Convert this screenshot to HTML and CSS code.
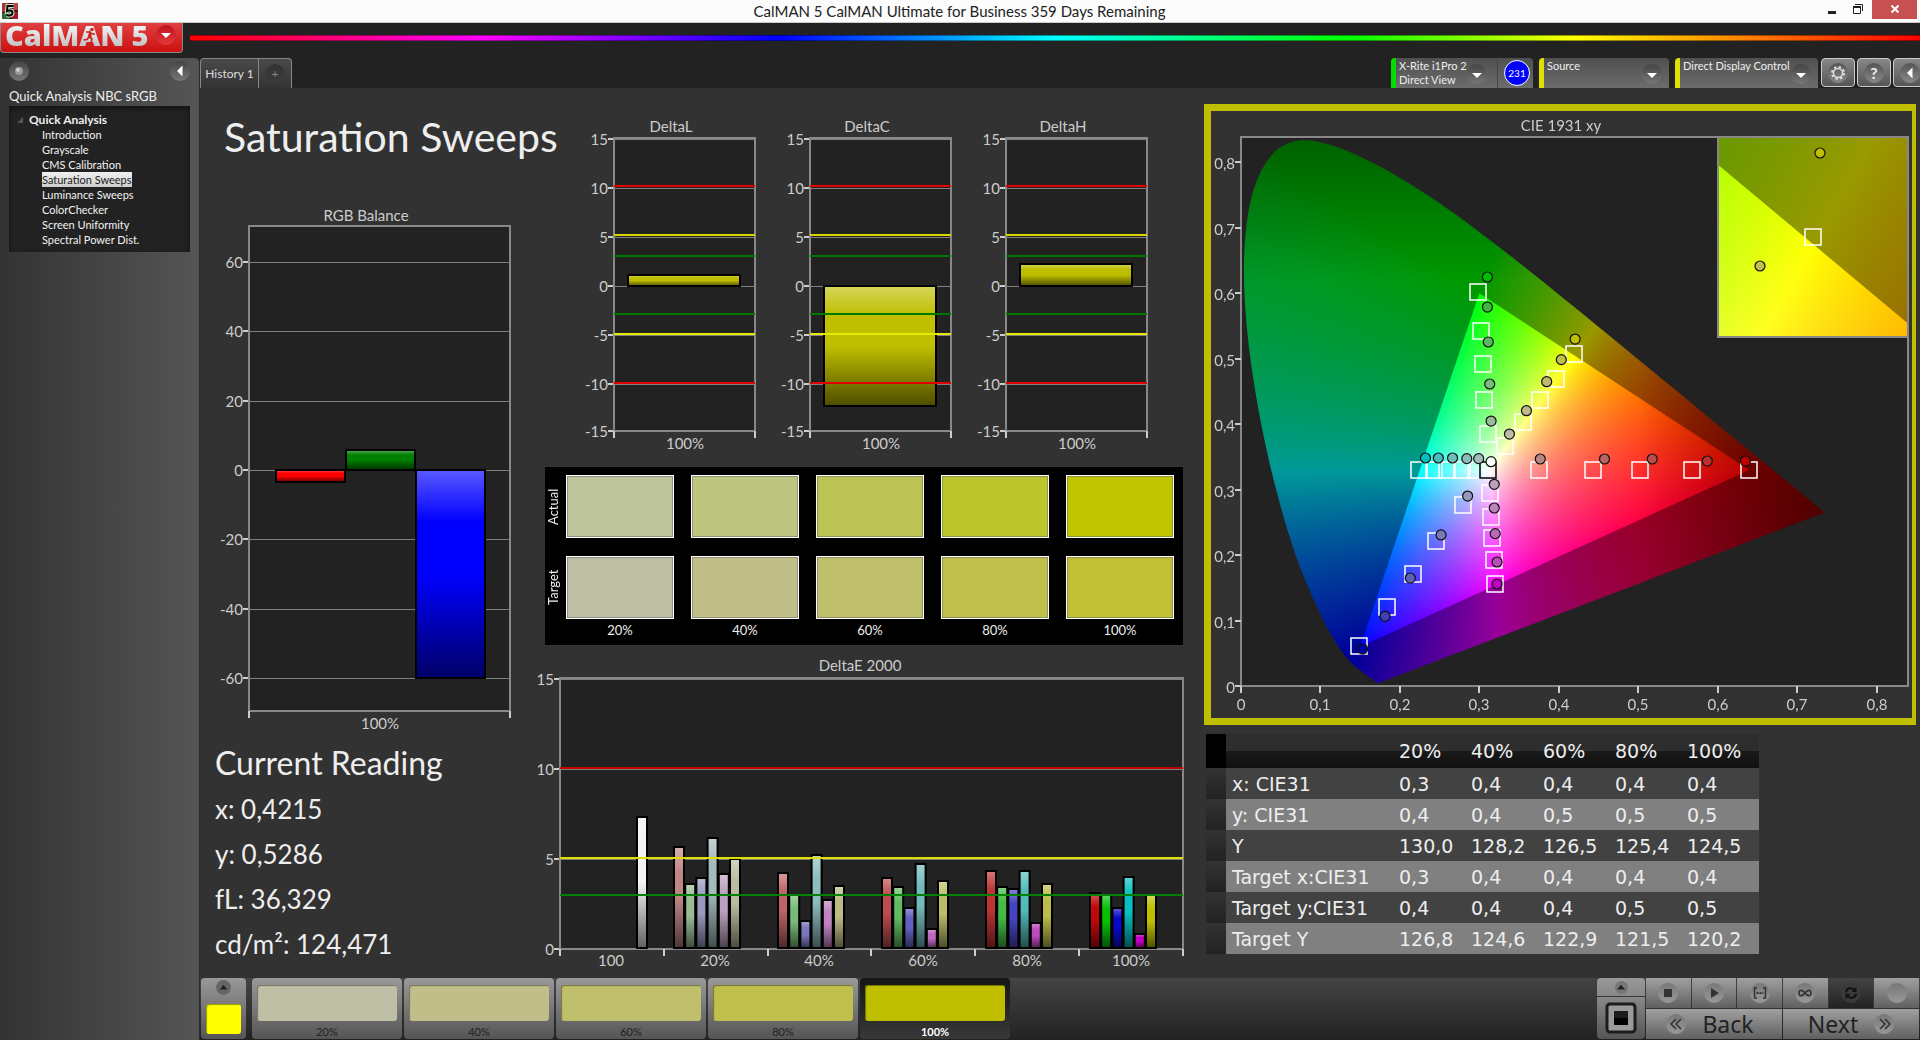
FILE: index.html
```html
<!DOCTYPE html>
<html lang="en">
<head>
  <meta charset="UTF-8" />
  <title>CalMAN 5 CalMAN Ultimate for Business</title>
  <link rel="stylesheet" href="styles.css">
</head>
<body>

  <!-- Shared gradients for every chart -->
  <svg class="defs" width="0" height="0" aria-hidden="true">
    <defs>
      <linearGradient id="shine" x1="0" y1="0" x2="0" y2="1">
        <stop offset="0" stop-color="#fff" stop-opacity="0.35" />
        <stop offset="0.25" stop-color="#fff" stop-opacity="0" />
        <stop offset="0.5" stop-color="#000" stop-opacity="0" />
        <stop offset="1" stop-color="#000" stop-opacity="0.6" />
      </linearGradient>
    </defs>
  </svg>

  <!-- Window title bar -->
  <header class="titlebar">
    <svg class="app-icon" viewBox="0 0 16 16">
      <rect width="16" height="16" fill="#3c1a1a" />
      <rect width="6" height="9" fill="#a33" />
      <rect x="11" width="5" height="7" fill="#b44" />
      <rect y="10" width="7" height="6" fill="#2a6a2a" />
      <rect x="10" y="9" width="6" height="7" fill="#a01830" />
      <path d="M11.5 3H5.5L5 8c2-1 5.500-.8 5.500 1.800S7.500 13 4.500 12" fill="none" stroke="#cfe8c8" stroke-width="4" />
      <path d="M11.500 3H5.500L5 8c2-1 5.500-.8 5.500 1.800S7.500 13 4.500 12" fill="none" stroke="#000" stroke-width="2" />
    </svg>
    <span class="window-title">CalMAN 5 CalMAN Ultimate for Business 359 Days Remaining</span>
    <div class="window-buttons">
      <button class="win" aria-label="Minimize"><svg viewBox="0 0 12 12"><path d="M2 9.500h8" stroke="#222" stroke-width="3" /></svg></button>
      <button class="win" aria-label="Restore"><svg viewBox="0 0 12 12"><path d="M3 1.500h7.500V8M1.500 4.500h7v6h-7z" fill="none" stroke="#222" /><path d="M1 4h8" stroke="#222" stroke-width="2" /></svg></button>
      <button class="win close" aria-label="Close"><svg viewBox="0 0 12 12"><path d="M2.500 2.500l7 7M9.500 2.500l-7 7" stroke="#fff" stroke-width="2" /></svg></button>
    </div>
  </header>

  <div class="brandbar">
    <button class="logo" aria-label="CalMAN 5 menu">
      <span class="logo-text">CalMAN</span>
      <svg class="runner" viewBox="0 0 14 16"><circle cx="9" cy="2.500" r="1.800" fill="#c22" /><path d="M3 5l4 0 2 2 3 0M7.500 5L6 10l3 2-1 3.500M6 10l-2 2.500-3.500.5" fill="none" stroke="#c22" stroke-width="1.600" /></svg>
      <span class="logo-text">5</span>
      <span class="knob knob-red"><svg viewBox="0 0 20 20"><path d="M5 8h10l-5 5z" fill="#fff" /></svg></span>
    </button>
    <div class="rainbow"></div>
  </div>

  <div class="workspace">
    <!-- Workflow tree -->
    <aside class="sidebar">
      <div class="sidebar-top">
        <button class="knob" aria-label="Record"><svg viewBox="0 0 20 20"><circle cx="10" cy="10" r="4" fill="#999" /><circle cx="9" cy="9" r="2" fill="#ccc" /></svg></button>
        <button class="knob" aria-label="Collapse"><svg viewBox="0 0 20 20"><path d="M12.500 4.500v11L7 10z" fill="#fff" /></svg></button>
      </div>
      <h2>Quick Analysis NBC sRGB</h2>
      <nav class="tree">
        <p class="tree-root"><svg viewBox="0 0 6 6"><path d="M6 0v6H0z" fill="#555" /></svg>Quick Analysis</p>
        <a href="#">Introduction</a>
        <a href="#">Grayscale</a>
        <a href="#">CMS Calibration</a>
        <a href="#" class="selected">Saturation Sweeps</a>
        <a href="#">Luminance Sweeps</a>
        <a href="#">ColorChecker</a>
        <a href="#">Screen Uniformity</a>
        <a href="#">Spectral Power Dist.</a>
      </nav>
    </aside>

    <main class="main">
      <div class="toolbar">
        <div class="tabs">
          <button class="tab">History 1</button>
          <button class="tab tab-add" aria-label="Add history"><span class="knob">+</span></button>
        </div>
        <div class="devices">
          <div class="device-group">
            <button class="device meter">
              <span>X-Rite i1Pro 2<br>Direct View</span>
              <span class="knob"><svg viewBox="0 0 20 20"><path d="M5 9h10l-5 5z" fill="#fff" /></svg></span>
            </button>
            <span class="count">231</span>
          </div>
          <button class="device source">
            <span>Source</span>
            <span class="knob"><svg viewBox="0 0 20 20"><path d="M5 9h10l-5 5z" fill="#fff" /></svg></span>
          </button>
          <button class="device display">
            <span>Direct Display Control</span>
            <span class="knob"><svg viewBox="0 0 20 20"><path d="M5 9h10l-5 5z" fill="#fff" /></svg></span>
          </button>
          <div class="tools">
            <button class="tool" aria-label="Settings"><span class="knob"><svg viewBox="0 0 20 20"><circle cx="10" cy="10" r="4.500" fill="none" stroke="#ddd" stroke-width="1.500" /><circle cx="10" cy="10" r="6" fill="none" stroke="#ddd" stroke-width="2" stroke-dasharray="2.400 2.312" /></svg></span></button>
            <button class="tool" aria-label="Help"><span class="knob help">?</span></button>
            <button class="tool" aria-label="Hide panel"><span class="knob"><svg viewBox="0 0 20 20"><path d="M12.500 4.500v11L7 10z" fill="#fff" /></svg></span></button>
          </div>
        </div>
      </div>

      <div class="content">
        <section class="col-left">
          <h1>Saturation Sweeps</h1>
          <svg id="rgbBalance" class="chart" viewBox="0 0 321 530"></svg>
          <div class="readings">
            <h3>Current Reading</h3>
            <p>x: 0,4215</p>
            <p>y: 0,5286</p>
            <p>fL: 36,329</p>
            <p>cd/m²: 124,471</p>
          </div>
        </section>

        <section class="col-middle">
          <div class="deltas">
            <svg id="deltaL" class="chart" viewBox="0 0 196 345"></svg>
            <svg id="deltaC" class="chart" viewBox="0 0 196 345"></svg>
            <svg id="deltaH" class="chart" viewBox="0 0 196 345"></svg>
          </div>
          <div class="swatches">
            <span class="side-label">Actual</span>
            <div class="swatch a20"></div>
            <div class="swatch a40"></div>
            <div class="swatch a60"></div>
            <div class="swatch a80"></div>
            <div class="swatch a100"></div>
            <span class="side-label">Target</span>
            <div class="swatch t20"></div>
            <div class="swatch t40"></div>
            <div class="swatch t60"></div>
            <div class="swatch t80"></div>
            <div class="swatch t100"></div>
            <span></span>
            <span class="percent">20%</span>
            <span class="percent">40%</span>
            <span class="percent">60%</span>
            <span class="percent">80%</span>
            <span class="percent">100%</span>
          </div>
          <svg id="deltaE" class="chart" viewBox="0 0 654 322"></svg>
        </section>

        <section class="col-right">
          <div class="cie">
            <canvas id="cieColors" width="701" height="607"></canvas>
            <svg id="ciePoints" class="chart" viewBox="0 0 701 607"></svg>
          </div>
          <table class="results">
            <thead>
              <tr><th class="grip"></th><th></th><th>20%</th><th>40%</th><th>60%</th><th>80%</th><th>100%</th></tr>
            </thead>
            <tbody>
              <tr><td class="grip"></td><th>x: CIE31</th><td>0,3</td><td>0,4</td><td>0,4</td><td>0,4</td><td>0,4</td></tr>
              <tr><td class="grip"></td><th>y: CIE31</th><td>0,4</td><td>0,4</td><td>0,5</td><td>0,5</td><td>0,5</td></tr>
              <tr><td class="grip"></td><th>Y</th><td>130,0</td><td>128,2</td><td>126,5</td><td>125,4</td><td>124,5</td></tr>
              <tr><td class="grip"></td><th>Target x:CIE31</th><td>0,3</td><td>0,4</td><td>0,4</td><td>0,4</td><td>0,4</td></tr>
              <tr><td class="grip"></td><th>Target y:CIE31</th><td>0,4</td><td>0,4</td><td>0,4</td><td>0,5</td><td>0,5</td></tr>
              <tr><td class="grip"></td><th>Target Y</th><td>126,8</td><td>124,6</td><td>122,9</td><td>121,5</td><td>120,2</td></tr>
            </tbody>
          </table>
        </section>
      </div>

      <footer class="bottombar">
        <button class="current-color" aria-label="Current color">
          <svg viewBox="0 0 16 16"><circle cx="8" cy="8" r="8" fill="#666" /><path d="M4 10h8L8 5z" fill="#222" /></svg>
          <span class="chip"></span>
        </button>
        <div class="steps">
          <button class="step"><span class="chip t20"></span>20%</button>
          <button class="step"><span class="chip t40"></span>40%</button>
          <button class="step"><span class="chip t60"></span>60%</button>
          <button class="step"><span class="chip t80"></span>80%</button>
          <button class="step active"><span class="chip y100"></span>100%</button>
        </div>
        <div class="pattern">
          <button aria-label="Expand"><svg viewBox="0 0 16 16"><circle cx="8" cy="8" r="7" fill="#777" /><path d="M3 10h9L7.500 5z" fill="#222" /></svg></button>
          <button aria-label="Pattern window"><svg viewBox="0 0 32 32"><rect x="2" y="2" width="28" height="28" rx="3" fill="#9a9a9a" stroke="#1c1c1c" stroke-width="3" /><rect x="9" y="9" width="14" height="14" fill="#000" /><rect x="9" y="9" width="14" height="7" fill="#1c1c1c" /></svg></button>
        </div>
        <div class="transport">
          <button aria-label="Stop"><span class="knob"><svg viewBox="0 0 20 20"><path d="M6 6h8v8H6z" fill="#333" /></svg></span></button>
          <button aria-label="Play"><span class="knob"><svg viewBox="0 0 20 20"><path d="M7 5l8 5-8 5z" fill="#333" /></svg></span></button>
          <button aria-label="Read series"><span class="knob"><svg viewBox="0 0 20 20"><path d="M7 5H4.500v10H7M13 5h2.500v10H13" fill="none" stroke="#333" stroke-width="1.500" /><path d="M6.500 10h7" stroke="#333" stroke-width="2" stroke-dasharray="2 1" /></svg></span></button>
          <button aria-label="Continuous"><span class="knob"><svg viewBox="0 0 20 20"><path d="M10 10c-2-3-6-4-6 0s4 3 6 0 6-4 6 0-4 3-6 0z" fill="none" stroke="#333" stroke-width="1.700" /></svg></span></button>
          <button class="pressed" aria-label="Repeat"><span class="knob"><svg viewBox="0 0 20 20"><path d="M5 9.500C5 5.500 10 4 13 6.500M15 10.500c0 4-5 5.500-8 3" fill="none" stroke="#111" stroke-width="2" /><path d="M15.500 4v5h-5zM4.500 16v-5h5z" fill="#111" /></svg></span></button>
          <button aria-label="Status"><span class="knob"></span></button>
          <button class="nav-button back"><span class="knob"><svg viewBox="0 0 20 20"><path d="M10 5l-5 5 5 5M15 5l-5 5 5 5" fill="none" stroke="#333" stroke-width="1.500" /></svg></span>Back</button>
          <button class="nav-button next">Next<span class="knob"><svg viewBox="0 0 20 20"><path d="M6 5l5 5-5 5M11 5l5 5-5 5" fill="none" stroke="#333" stroke-width="1.500" /></svg></span></button>
        </div>
      </footer>
    </main>
  </div>

  <script src="script.js"></script>
</body>
</html>
```
FILE: styles.css
```css
* {
  box-sizing: border-box;
}
body {
  font-family: Lato, 'Liberation Sans', sans-serif;
  margin: 0;
  min-height: 100vh;
  display: flex;
  flex-direction: column;
  background: #222;
  color: #eee;
}
button {
  font-family: inherit;
  color: inherit;
  border: none;
  padding: 0;
  background: none;
  cursor: pointer;
}
h1, h2, h3, p {
  margin: 0;
  font-weight: normal;
}
.defs {
  position: absolute;
}

/* Title bar */
.titlebar {
  display: flex;
  align-items: center;
  height: 23px;
  padding: 0 3px 0 2px;
  background: #fcfcfc;
  border-bottom: 1px solid #ccc;
  color: #222;
}
.app-icon {
  width: 16px;
  height: 16px;
}
.window-title {
  flex: 1;
  text-align: center;
  font-size: 15px;
  padding-left: 82px;
}
.window-buttons {
  display: flex;
  align-self: flex-start;
}
.win {
  width: 26px;
  height: 19px;
}
.win svg {
  width: 12px;
  height: 12px;
}
.win.close {
  width: 45px;
  margin-left: 1px;
  background: #c75050;
}

/* Logo and rainbow line */
.brandbar {
  display: flex;
  align-items: flex-start;
  gap: 7px;
  height: 35px;
}
.logo {
  position: relative;
  display: flex;
  align-items: center;
  gap: 7px;
  width: 183px;
  height: 30px;
  padding: 0 0 5px 4px;
  background: linear-gradient(#e04040, #cc1010);
  border: 1px solid #888;
  border-top: none;
  border-radius: 0 0 4px 4px;
}
.logo-text {
  font-family: 'Open Sans', sans-serif;
  font-size: 29px;
  line-height: 28px;
  font-weight: 800;
  background: linear-gradient(#fff, #bbb);
  background-clip: text;
  color: transparent;
}
.runner {
  position: absolute;
  left: 82px;
  top: 4px;
  width: 14px;
  height: 16px;
}
.rainbow {
  flex: 1;
  height: 6px;
  margin-top: 12px;
  border: 1px solid rgba(0, 0, 0, 0.4);
  border-width: 1px 0;
  background: linear-gradient(to right, #f00, #f0f 17%, #00f 34%, #0ff 50%, #0f0 67%, #ff0 80%, #f00);
}

/* Round icon holder used all over */
.knob {
  display: flex;
  align-items: center;
  justify-content: center;
  flex: none;
  width: 20px;
  height: 20px;
  border-radius: 50%;
  background: linear-gradient(#444, #777);
}
.knob svg {
  width: 20px;
  height: 20px;
}
.knob-red {
  background: linear-gradient(#c01020, #e03a3a);
}

.workspace {
  flex: 1;
  display: grid;
  grid-template-columns: 200px minmax(0, 1fr);
}

/* Sidebar */
.sidebar {
  padding: 3px 9px;
  background: linear-gradient(to right, #333, #555);
  border-right: 1px solid #2a2a2a;
  border-radius: 0 5px 0 0;
}
.sidebar-top {
  display: flex;
  justify-content: space-between;
}
.sidebar h2 {
  font-size: 13px;
  line-height: 20px;
  margin: 5px 0 0;
}
.tree {
  display: flex;
  flex-direction: column;
  align-items: flex-start;
  height: 146px;
  padding: 6px 8px 0 33px;
  background: #222;
  box-shadow: inset 0 2px 5px #111;
}
.tree-root {
  display: flex;
  align-items: center;
  gap: 6px;
  margin-left: -25px;
  font-size: 12px;
  line-height: 15px;
  font-weight: bold;
}
.tree-root svg {
  width: 6px;
  height: 6px;
}
.tree a {
  color: #f2f2f2;
  font-size: 11px;
  line-height: 15px;
  text-decoration: none;
}
.tree a.selected {
  background: linear-gradient(#f0f0f0, #ccc);
  color: #222;
}

/* Tabs and device buttons */
.main {
  display: flex;
  flex-direction: column;
  background: #323232;
}
.toolbar {
  display: flex;
  justify-content: space-between;
  height: 30px;
  background: #222;
}
.tabs {
  display: flex;
  border: 1px solid #888;
  border-bottom: none;
  border-radius: 4px 4px 0 0;
  background: linear-gradient(#4a4a4a, #333);
}
.tab {
  width: 57px;
  font-size: 12px;
  color: #ddd;
}
.tab-add {
  display: flex;
  align-items: center;
  justify-content: center;
  width: 33px;
  border-left: 1px solid #888;
  color: #888;
}
.tab-add .knob {
  background: linear-gradient(#333, #3c3c3c);
}
.devices {
  display: flex;
  gap: 6px;
  overflow: hidden;
}
.device-group {
  display: flex;
  align-items: center;
  gap: 6px;
  padding-right: 3px;
  background: linear-gradient(#505050, #6c6c6c);
  border-radius: 4px 4px 0 0;
}
.device {
  display: flex;
  align-items: flex-start;
  justify-content: space-between;
  height: 30px;
  padding: 1px 7px 0 3px;
  border-left: 5px solid #e0e000;
  border-radius: 4px 4px 0 0;
  background: linear-gradient(#505050, #6c6c6c);
  font-size: 11px;
  line-height: 14px;
  text-align: left;
  white-space: nowrap;
}
.device .knob {
  margin-top: 5px;
}
.meter {
  width: 107px;
  padding-right: 10px;
  border-left-color: #00e000;
  border-right: 1px solid #444;
}
.source {
  width: 130px;
}
.display {
  width: 143px;
}
.count {
  width: 26px;
  height: 26px;
  border: 1px solid #fff;
  border-radius: 50%;
  background: #00f;
  color: #fff;
  font-size: 10px;
  line-height: 24px;
  text-align: center;
}
.tools {
  display: flex;
  gap: 2px;
  margin-left: -3px;
  margin-right: -7px;
}
.tool {
  display: flex;
  align-items: center;
  justify-content: center;
  width: 34px;
  height: 29px;
  border: 1px solid #ccc;
  border-radius: 4px;
  background: linear-gradient(#888, #555);
}
.tool .knob {
  background: linear-gradient(#555, #888);
}
.help {
  font-size: 16px;
  font-weight: bold;
}

/* Page content */
.content {
  flex: 1;
  display: grid;
  grid-template-columns: minmax(0, 321fr) minmax(0, 654fr) minmax(0, 712fr);
  gap: 14px;
  align-items: start;
  padding-right: 4px;
  padding-left: 1px;
}
.chart {
  display: block;
  width: 100%;
  height: auto;
}
.chart text {
  fill: #ccc;
  font-size: 15px;
}
.frame {
  fill: none;
  stroke: #888;
  stroke-width: 2;
}
.plot {
  fill: #222;
}
.grid {
  stroke: #808080;
  stroke-width: 1;
  shape-rendering: crispEdges;
}
.tick {
  stroke: #ccc;
  stroke-width: 2;
  shape-rendering: crispEdges;
}
.col-left h1 {
  font-size: 41px;
  line-height: 60px;
  padding: 19px 0 37px 23px;
  white-space: nowrap;
}
.readings {
  padding: 5px 0 0 14px;
  font-size: 26px;
  line-height: 45px;
  white-space: nowrap;
}
.readings h3 {
  font-size: 32px;
  line-height: 48px;
}
.col-middle {
  padding-top: 24px;
}
.deltas {
  display: grid;
  grid-template-columns: 1fr 1fr 1fr;
  padding: 0 25px 0 41px;
}

/* Actual / target swatches */
.swatches {
  display: grid;
  grid-template-columns: 4px repeat(5, 1fr);
  column-gap: 17px;
  margin: 10px 7px 4px 9px;
  padding: 8px 9px 0 0;
  height: 178px;
  grid-template-rows: 63px 63px 26px;
  row-gap: 18px;
  background: #000;
}
.side-label {
  writing-mode: vertical-rl;
  rotate: 180deg;
  text-align: center;
  font-size: 13px;
  line-height: 16px;
  width: 16px;
}
.swatch {
  border: 1px solid #fff;
  box-shadow: inset 0 0 0 1px rgba(100, 100, 100, 0.5);
}
.percent {
  margin-top: -17px;
  text-align: center;
  font-size: 13px;
  line-height: 20px;
}
.a20 { background: #bdc49a; }
.a40 { background: #bec57e; }
.a60 { background: #bcc455; }
.a80 { background: #bbc52c; }
.a100 { background: #bfc500; }
.t20 { background: #bfbfa6; }
.t40 { background: #c0bf8a; }
.t60 { background: #c0bf6c; }
.t80 { background: #bfc04c; }
.t100 { background: #c0c036; }
.y100 { background: #bfbf00; }

/* CIE diagram, canvas under the SVG markers */
.col-right {
  padding-top: 16px;
}
.cie {
  display: grid;
  border: 7px solid #bfbf00;
  border-right-width: 4px;
}
.cie canvas,
.cie svg {
  grid-area: 1 / 1;
  width: 100%;
}
.target {
  fill: none;
  stroke: #fff;
  stroke-width: 1.5;
}
.white-target {
  stroke: #000;
}
.reading {
  stroke: #111;
  stroke-width: 1.2;
}

/* Results table */
.results {
  margin: 9px 0 0 2px;
  width: 547px;
  border-collapse: collapse;
  table-layout: fixed;
  font-family: 'DejaVu Sans', sans-serif;
  font-size: 19px;
  line-height: 24px;
}
.results th,
.results td {
  width: 72px;
  height: 31px;
  padding: 0;
  text-align: left;
  font-weight: normal;
  white-space: nowrap;
}
.results th:nth-child(2) {
  width: 173px;
  padding-left: 6px;
}
.results .grip {
  width: 20px;
  background: linear-gradient(#333, #222);
}
.results thead tr {
  height: 34px;
  background: linear-gradient(#2d2d2d 50%, #191919 50%, #111);
}
.results thead .grip {
  background: #000;
}
.results tbody tr {
  background: #424242;
}
.results tbody tr:nth-child(even) {
  background: #808080;
}

/* Bottom bar */
.bottombar {
  display: flex;
  height: 62px;
  padding: 0 1px 1px;
  background: linear-gradient(#444, #222);
}
.chip {
  display: block;
  border-radius: 3px;
  box-shadow: inset 1px 1px 1px rgba(0, 0, 0, 0.4);
}
.current-color {
  display: flex;
  flex-direction: column;
  align-items: center;
  gap: 9px;
  width: 45px;
  padding-top: 2px;
  border-radius: 4px;
  background: linear-gradient(#999, #555);
}
.current-color svg {
  width: 15px;
  height: 15px;
}
.current-color .chip {
  width: 35px;
  height: 30px;
  background: #ff0;
}
.steps {
  display: flex;
  gap: 2px;
  margin-left: 6px;
}
.step {
  width: 150px;
  padding: 5px 5px 0;
  border-radius: 4px;
  background: linear-gradient(#999, #555);
  color: #222;
  font-size: 11px;
}
.step .chip {
  height: 36px;
  margin-bottom: 4px;
}
.step.active {
  background: linear-gradient(#151515, #383838);
  color: #fff;
  font-weight: bold;
}
.pattern {
  display: flex;
  flex-direction: column;
  gap: 1px;
  width: 48px;
  margin-left: auto;
}
.pattern button {
  display: flex;
  align-items: center;
  justify-content: center;
  height: 18px;
  border-radius: 4px 4px 0 0;
  background: linear-gradient(#999, #888);
}
.pattern button svg {
  width: 15px;
  height: 15px;
}
.pattern button + button {
  flex: 1;
  border-radius: 0 0 4px 4px;
  background: linear-gradient(#888, #555);
}
.pattern button + button svg {
  width: 32px;
  height: 32px;
}
.transport {
  display: grid;
  grid-template-columns: repeat(6, 1fr);
  grid-template-rows: 30px 30px;
  gap: 1px;
  width: 273px;
  margin-left: 1px;
}
.transport button {
  display: flex;
  align-items: center;
  justify-content: center;
  background: linear-gradient(#a0a0a0, #606060);
}
.transport .knob {
  background: linear-gradient(#777, #999);
}
.transport .pressed {
  background: linear-gradient(#444, #222);
}
.transport .pressed .knob {
  background: #3a3a3a;
}
.transport .nav-button {
  grid-column: span 3;
  gap: 16px;
  font-family: 'Noto Sans', sans-serif;
  font-size: 23px;
  line-height: 30px;
  color: #222;
}
.transport .back {
  padding-right: 8px;
}
```
FILE: script.js
```javascript
const SVG_NS = 'http://www.w3.org/2000/svg';

function add(svg, name, attrs, text) {
  const el = document.createElementNS(SVG_NS, name);
  for (const key in attrs) el.setAttribute(key, attrs[key]);
  if (text !== undefined) el.textContent = text;
  svg.appendChild(el);
  return el;
}

function line(svg, x1, y1, x2, y2, cls) {
  return add(svg, 'line', { x1, y1, x2, y2, class: cls });
}

function bar(svg, x, top, width, bottom, color) {
  const box = { x, y: top, width, height: bottom - top };
  add(svg, 'rect', { ...box, fill: color });
  add(svg, 'rect', { ...box, fill: 'url(#shine)', stroke: '#000', 'stroke-width': 2 });
}

// Plot background, gridlines and the labels down the left side
function drawAxes(svg, p, values, y) {
  const w = p.right - p.left;
  const h = p.bottom - p.top;
  add(svg, 'rect', { x: p.left, y: p.top, width: w, height: h, class: 'plot' });
  values.forEach((v) => {
    line(svg, p.left, y(v), p.right, y(v), 'grid');
    line(svg, p.left - 6, y(v), p.left, y(v), 'tick');
    add(svg, 'text', { x: p.left - 6, y: y(v) + 6, 'text-anchor': 'end' }, v);
  });
  add(svg, 'rect', { x: p.left, y: p.top, width: w, height: h, class: 'frame' });
}

function drawLimits(svg, p, y, limits) {
  limits.forEach(([v, color]) => {
    add(svg, 'line', { x1: p.left, x2: p.right, y1: y(v), y2: y(v), stroke: color, 'stroke-width': 2 });
  });
}

// RGB balance
function drawBalance() {
  const svg = document.getElementById('rgbBalance');
  const p = { left: 48, right: 309, top: 22, bottom: 507 };
  const y = (v) => Math.round(266 - v * 3.47);
  drawAxes(svg, p, [60, 40, 20, 0, -20, -40, -60], y);
  bar(svg, 75, y(0), 69, y(-3.5), '#ff0000');
  bar(svg, 145, y(5.8), 69, y(0), '#008000');
  bar(svg, 215, y(0), 69, y(-60), '#0000ff');
  line(svg, p.left, p.bottom, p.left, p.bottom + 7, 'tick');
  line(svg, p.right, p.bottom, p.right, p.bottom + 7, 'tick');
  add(svg, 'text', { x: 165, y: 17, 'text-anchor': 'middle' }, 'RGB Balance');
  add(svg, 'text', { x: 179, y: 525, 'text-anchor': 'middle' }, '100%');
}

// DeltaL, DeltaC and DeltaH share one layout
function drawDelta(id, title, value) {
  const svg = document.getElementById(id);
  const p = { left: 37, right: 178, top: 26, bottom: 319 };
  const y = (v) => Math.min(319, Math.round(174 - v * 9.8));
  drawAxes(svg, p, [15, 10, 5, 0, -5, -10, -15], y);
  bar(svg, 51, y(Math.max(value, 0)), 112, y(Math.min(value, 0)), '#bfbf00');
  drawLimits(svg, p, y, [
    [10.2, '#e00000'], [5.2, '#d8d800'], [3.1, '#007800'],
    [-2.9, '#007800'], [-4.9, '#e8e800'], [-9.9, '#e00000']
  ]);
  line(svg, p.left, p.bottom, p.left, p.bottom + 7, 'tick');
  line(svg, p.right, p.bottom, p.right, p.bottom + 7, 'tick');
  add(svg, 'text', { x: 94, y: 20, 'text-anchor': 'middle' }, title);
  add(svg, 'text', { x: 108, y: 337, 'text-anchor': 'middle' }, '100%');
}

// DeltaE 2000, six colors per saturation step
function drawDeltaE() {
  const svg = document.getElementById('deltaE');
  const p = { left: 24, right: 647, top: 29, bottom: 300 };
  const y = (v) => Math.round(300 - v * 18);
  const groups = [
    ['20%', [5.65, 3.6, 3.95, 6.15, 4.15, 5], ['#bf8686', '#99bb94', '#9a99bf', '#a3babb', '#bba1bf', '#bcbba0']],
    ['40%', [4.25, 3, 1.55, 5.2, 2.7, 3.5], ['#bf6466', '#78bb78', '#7a79bf', '#8ebdbd', '#bf84bf', '#bdbb85']],
    ['60%', [3.95, 3.45, 2.3, 4.75, 1.1, 3.8], ['#bf4c4c', '#60bb60', '#6060bf', '#74bbbb', '#bf68bf', '#bcbb68']],
    ['80%', [4.35, 3.45, 3.35, 4.35, 1.45, 3.6], ['#bf3333', '#44bb44', '#4444bf', '#54bbbb', '#bf4cbf', '#bcbb4c']],
    ['100%', [3.1, 3, 2.3, 4, 0.85, 3], ['#c00808', '#08bf08', '#0808c8', '#08bfbf', '#c400c4', '#bfbf00']]
  ];
  drawAxes(svg, p, [15, 10, 5, 0], y);
  bar(svg, 101, y(7.35), 10, p.bottom - 1, '#f2f2f2');
  add(svg, 'text', { x: 75, y: 317, 'text-anchor': 'middle' }, '100');
  groups.forEach(([label, values, colors], g) => {
    const start = 138 + g * 104;
    values.forEach((v, i) => bar(svg, start + i * 11.2, y(v), 10, p.bottom - 1, colors[i]));
    add(svg, 'text', { x: 179 + g * 104, y: 317, 'text-anchor': 'middle' }, label);
  });
  drawLimits(svg, p, y, [[10.05, '#c00000'], [5.05, '#e0e000'], [3, '#008000']]);
  for (let i = 0; i <= 6; i++) {
    const x = Math.round(p.left + i * 103.8);
    line(svg, x, p.bottom, x, p.bottom + 7, 'tick');
  }
  add(svg, 'text', { x: 324, y: 22, 'text-anchor': 'middle' }, 'DeltaE 2000');
}

// CIE 1931 chromaticity diagram
const CIE = { left: 30, right: 697, top: 26, bottom: 575 };
const INSET = { left: 507, right: 697, top: 26, bottom: 226 };
const cieX = (x) => CIE.left + x * 794.4;
const cieY = (y) => CIE.bottom - y * 654.4;
const insetX = (x) => 602 + (x - 0.4193) * 3300;
const insetY = (y) => 126 - (y - 0.5073) * 3475;

const LOCUS = [
  [0.1741, 0.005], [0.1714, 0.0051], [0.1644, 0.0109], [0.1566, 0.0177], [0.144, 0.0297],
  [0.1355, 0.0399], [0.1241, 0.0578], [0.1096, 0.0868], [0.0913, 0.1327], [0.0687, 0.2007],
  [0.0454, 0.295], [0.0235, 0.4127], [0.0082, 0.5384], [0.0039, 0.6548], [0.0139, 0.7502],
  [0.0389, 0.812], [0.0743, 0.8338], [0.1142, 0.8262], [0.1547, 0.8059], [0.1929, 0.7816],
  [0.2296, 0.7543], [0.2658, 0.7243], [0.3016, 0.6923], [0.3373, 0.6589], [0.3731, 0.6245],
  [0.4441, 0.5547], [0.5125, 0.4866], [0.5752, 0.4242], [0.627, 0.3725], [0.6658, 0.334],
  [0.6915, 0.3083], [0.719, 0.2809], [0.7347, 0.2653]
];
const GAMUT = [[0.3, 0.6], [0.64, 0.33], [0.15, 0.06]];

function xyToRgb(x, y, level) {
  const z = 1 - x - y;
  const rgb = [
    3.2406 * x - 1.5372 * y - 0.4986 * z,
    -0.9689 * x + 1.8758 * y + 0.0415 * z,
    0.0557 * x - 0.204 * y + 1.057 * z
  ].map((v) => Math.max(v, 0));
  const max = Math.max(...rgb);
  // colors fade toward deep red and deep green
  if (x > 0.5) level *= 1 - (x - 0.5) * 2.1;
  if (y > 0.62) level *= 1 - (y - 0.62) * 1.7;
  return rgb.map((v) => Math.pow(v / max, 0.85) * 255 * level);
}

// Fill a canvas with the color of each chromaticity
function colorLayer(width, height, toX, toY, level) {
  const canvas = document.createElement('canvas');
  canvas.width = width;
  canvas.height = height;
  const ctx = canvas.getContext('2d');
  const img = ctx.createImageData(width, height);
  for (let py = 0; py < height; py++) {
    for (let px = 0; px < width; px++) {
      const rgb = xyToRgb(toX(px), toY(py), level);
      const i = (py * width + px) * 4;
      img.data[i] = rgb[0];
      img.data[i + 1] = rgb[1];
      img.data[i + 2] = rgb[2];
      img.data[i + 3] = 255;
    }
  }
  ctx.putImageData(img, 0, 0);
  return canvas;
}

function tracePolygon(ctx, points, fx, fy) {
  ctx.beginPath();
  points.forEach(([x, y], i) => (i ? ctx.lineTo(fx(x), fy(y)) : ctx.moveTo(fx(x), fy(y))));
  ctx.closePath();
}

function traceLocus(ctx) {
  ctx.beginPath();
  ctx.moveTo(cieX(LOCUS[0][0]), cieY(LOCUS[0][1]));
  for (let i = 0; i < LOCUS.length - 1; i++) {
    const p0 = LOCUS[Math.max(i - 1, 0)];
    const p1 = LOCUS[i];
    const p2 = LOCUS[i + 1];
    const p3 = LOCUS[Math.min(i + 2, LOCUS.length - 1)];
    ctx.bezierCurveTo(
      cieX(p1[0] + (p2[0] - p0[0]) / 6), cieY(p1[1] + (p2[1] - p0[1]) / 6),
      cieX(p2[0] - (p3[0] - p1[0]) / 6), cieY(p2[1] - (p3[1] - p1[1]) / 6),
      cieX(p2[0]), cieY(p2[1])
    );
  }
  ctx.closePath();
}

function drawCieColors() {
  const canvas = document.getElementById('cieColors');
  const ctx = canvas.getContext('2d');
  const w = canvas.width;
  const h = canvas.height;
  ctx.fillStyle = '#222';
  ctx.fillRect(CIE.left, CIE.top, CIE.right - CIE.left, CIE.bottom - CIE.top);

  const toX = (px) => (px - CIE.left) / 794.4;
  const toY = (py) => (CIE.bottom - py) / 654.4;
  ctx.fillStyle = ctx.createPattern(colorLayer(w, h, toX, toY, 0.6), 'no-repeat');
  traceLocus(ctx);
  ctx.fill();
  ctx.fillStyle = ctx.createPattern(colorLayer(w, h, toX, toY, 1), 'no-repeat');
  tracePolygon(ctx, GAMUT, cieX, cieY);
  ctx.fill();

  // magnified corner around the current target
  const zoomX = (px) => 0.4193 + (px - 602) / 3300;
  const zoomY = (py) => 0.5073 - (py - 126) / 3475;
  ctx.save();
  ctx.beginPath();
  ctx.rect(INSET.left, INSET.top, INSET.right - INSET.left, INSET.bottom - INSET.top);
  ctx.clip();
  ctx.drawImage(colorLayer(w, h, zoomX, zoomY, 0.6), 0, 0);
  ctx.fillStyle = ctx.createPattern(colorLayer(w, h, zoomX, zoomY, 1), 'no-repeat');
  tracePolygon(ctx, GAMUT, insetX, insetY);
  ctx.fill();
  ctx.restore();
}

const TARGETS = [
  [0.2986, 0.602], [0.3027, 0.543], [0.3044, 0.4915], [0.3062, 0.437], [0.3108, 0.385],
  [0.4194, 0.5073], [0.3969, 0.4691], [0.3767, 0.437], [0.3553, 0.4034], [0.3327, 0.3667],
  [0.2235, 0.33], [0.2431, 0.33], [0.2588, 0.33], [0.2778, 0.33], [0.2957, 0.33],
  [0.3755, 0.33], [0.4431, 0.33], [0.5027, 0.33], [0.5674, 0.33], [0.6396, 0.33],
  [0.2796, 0.2766], [0.246, 0.2216], [0.216, 0.1717], [0.1842, 0.1202], [0.1489, 0.0611],
  [0.3131, 0.2944], [0.3148, 0.2582], [0.3165, 0.2262], [0.3188, 0.1925], [0.32, 0.1559]
];
const READINGS = [
  [0.3102, 0.625, '#00bf00'], [0.3102, 0.5791, '#3fb83f'], [0.3113, 0.5257, '#5cb860'], [0.3131, 0.4615, '#7abb7c'], [0.3148, 0.4049, '#99bb99'],
  [0.4206, 0.5302, '#bfbf00'], [0.4032, 0.4987, '#bfbf4c'], [0.3848, 0.465, '#bfbb6c'], [0.3593, 0.4207, '#bfbb88'], [0.3379, 0.385, '#bfbba4'],
  [0.2322, 0.3484, '#00bfbf'], [0.2484, 0.3484, '#4cbbbb'], [0.2663, 0.3484, '#70bbb8'], [0.2842, 0.3474, '#8cbbbb'], [0.2992, 0.3474, '#a4bbbb'],
  [0.3767, 0.3469, '#bb8484'], [0.4576, 0.3469, '#bb6464'], [0.5177, 0.3469, '#bb4c4c'], [0.587, 0.3438, '#bb3030'], [0.635, 0.3438, '#bf0000'],
  [0.2853, 0.2903, '#9898bb'], [0.2518, 0.2308, '#7878bb'], [0.2131, 0.165, '#6060b8'], [0.1813, 0.1065, '#4040b0'], [0.153, 0.0565, '#0000a8'],
  [0.3188, 0.3082, '#bba0bb'], [0.3188, 0.272, '#bb84bb'], [0.32, 0.2328, '#bb68bb'], [0.3223, 0.1895, '#bb4cbb'], [0.3223, 0.1559, '#bf00bf'],
  [0.3148, 0.3428, '#ffffff']
];

function square(svg, x, y, cls) {
  add(svg, 'rect', { x: Math.round(x) - 8, y: Math.round(y) - 8, width: 16, height: 16, class: cls });
}

function drawCiePoints() {
  const svg = document.getElementById('ciePoints');
  add(svg, 'text', { x: 350, y: 20, 'text-anchor': 'middle' }, 'CIE 1931 xy');
  add(svg, 'rect', { x: CIE.left, y: CIE.top, width: CIE.right - CIE.left, height: CIE.bottom - CIE.top, class: 'frame' });
  add(svg, 'rect', { x: INSET.left, y: INSET.top, width: INSET.right - INSET.left, height: INSET.bottom - INSET.top, class: 'frame' });
  for (let i = 0; i <= 8; i++) {
    const label = i ? '0,' + i : '0';
    const x = Math.round(cieX(i / 10));
    const y = Math.round(cieY(i / 10));
    line(svg, x, CIE.bottom, x, CIE.bottom + 7, 'tick');
    line(svg, CIE.left - 6, y, CIE.left, y, 'tick');
    add(svg, 'text', { x, y: 599, 'text-anchor': 'middle' }, label);
    add(svg, 'text', { x: CIE.left - 6, y: y + 7, 'text-anchor': 'end' }, label);
  }
  TARGETS.forEach(([x, y]) => square(svg, cieX(x), cieY(y), 'target'));
  square(svg, cieX(0.3113), cieY(0.33), 'target white-target');
  READINGS.forEach(([x, y, fill]) => {
    add(svg, 'circle', { cx: cieX(x), cy: cieY(y), r: 5, fill, class: 'reading' });
  });
  square(svg, 602, 126, 'target');
  add(svg, 'circle', { cx: 609, cy: 42, r: 5, fill: '#bfbf00', class: 'reading' });
  add(svg, 'circle', { cx: 549, cy: 155, r: 5, fill: '#bfbf4c', class: 'reading' });
}

drawBalance();
drawDelta('deltaL', 'DeltaL', 1.1);
drawDelta('deltaC', 'DeltaC', -12.2);
drawDelta('deltaH', 'DeltaH', 2.2);
drawDeltaE();
drawCieColors();
drawCiePoints();
```
